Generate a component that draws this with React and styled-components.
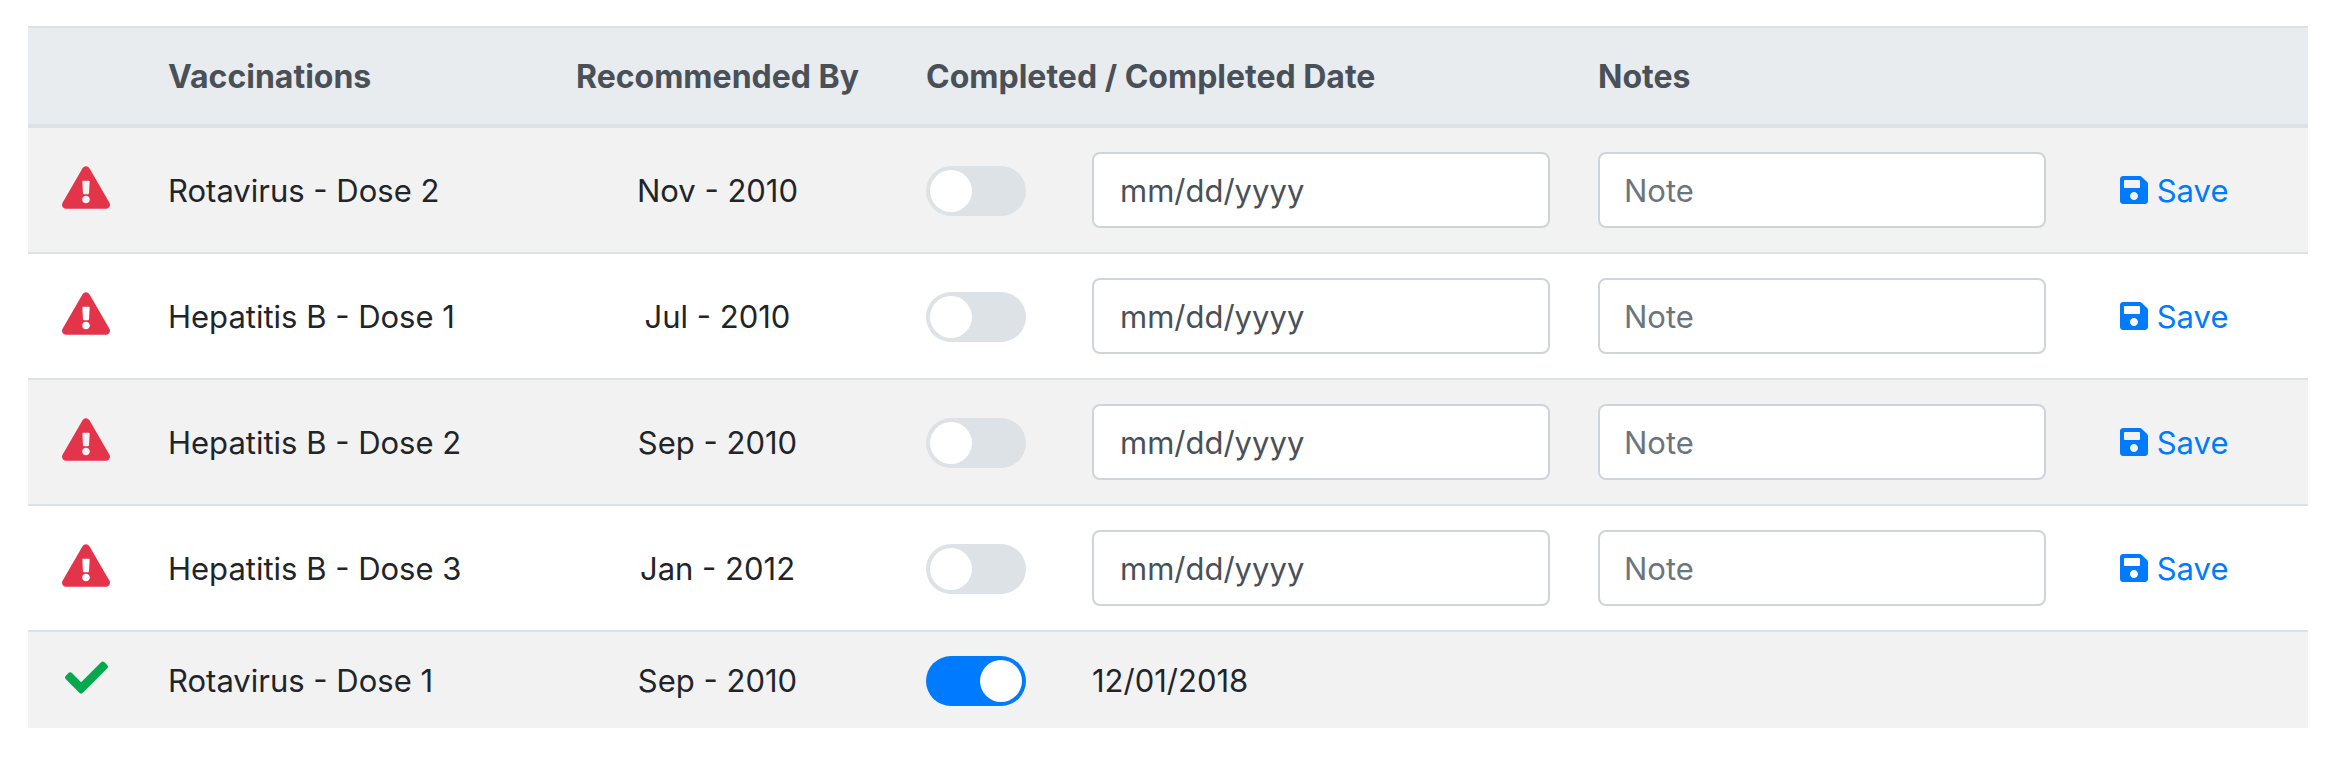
import React, { useState } from "react";
import styled, { createGlobalStyle } from "styled-components";
import { FaExclamationTriangle, FaCheck, FaSave } from "react-icons/fa";

const GlobalStyle = createGlobalStyle`
  *, *::before, *::after { box-sizing: border-box; }
  body {
    margin: 0;
    background: #fff;
    color: #212529;
    font-family: Inter, "Liberation Sans", sans-serif;
    font-size: 31px;
    line-height: 48px;
  }
`;

const Page = styled.main`
  padding: 26px 40px 32px 28px;
`;

const Table = styled.table`
  width: 100%;
  table-layout: fixed;
  border-collapse: separate;
  border-spacing: 0;
`;

const Col = styled.col`
  width: ${(p) => p.$width}px;
`;

const HeadCell = styled.th`
  padding: 25px 24px 23px;
  text-align: ${(p) => (p.$center ? "center" : "left")};
  white-space: nowrap;
  font-size: 32px;
  font-weight: 700;
  color: #495057;
  background: #e8ecef;
  border-top: 2px solid #dde2e6;
  border-bottom: 4px solid #dde2e6;
`;

const Row = styled.tr`
  &:nth-child(odd) {
    background: #f2f2f2;
  }
  &:not(:first-child) > td {
    border-top: 2px solid #dde2e6;
  }
`;

const Cell = styled.td`
  padding: 24px;
  vertical-align: middle;
  white-space: nowrap;
  text-align: ${(p) => (p.$center ? "center" : "left")};
`;

const TextCell = styled(Cell)`
  padding-block: 25px 23px;
`;

const ToggleCell = styled(Cell)`
  padding-block: 24px 22px;
`;

const StatusIcon = styled.svg`
  width: ${(p) => p.$width}px;
  height: 43px;
  vertical-align: -8px;
  color: ${(p) => p.$color};
`;

const Toggle = styled.input`
  appearance: none;
  display: flex;
  align-items: center;
  width: 100px;
  height: 50px;
  margin: 0;
  padding: 0 4px;
  border-radius: 25px;
  background: #dde2e6;
  cursor: pointer;

  &::before {
    content: "";
    width: 42px;
    height: 42px;
    border-radius: 50%;
    background: #fff;
  }
  &:checked {
    justify-content: flex-end;
    background: #007bff;
  }
`;

const TextField = styled.input`
  display: block;
  width: 100%;
  height: 76px;
  padding: 12px 24px;
  border: 2px solid #ced4da;
  border-radius: 8px;
  background: #fff;
  color: #495057;
  font: inherit;

  &::placeholder {
    color: #6c757d;
    opacity: 1;
  }
`;

const DateField = styled(TextField)`
  padding-inline: 26px;

  &::placeholder {
    color: #495057;
  }
`;

const SaveButton = styled.button`
  display: block;
  padding: 12px 24px;
  border: 2px solid transparent;
  background: none;
  color: #007bff;
  font: inherit;
  cursor: pointer;
`;

const SaveIcon = styled(FaSave)`
  width: 28px;
  height: 32px;
  vertical-align: -4px;
`;

const columns = [116, 389, 369, 166, 506, 496, 238];

const vaccinations = [
  { name: "Rotavirus - Dose 2", due: "Nov - 2010" },
  { name: "Hepatitis B - Dose 1", due: "Jul - 2010" },
  { name: "Hepatitis B - Dose 2", due: "Sep - 2010" },
  { name: "Hepatitis B - Dose 3", due: "Jan - 2012" },
  { name: "Rotavirus - Dose 1", due: "Sep - 2010", completedOn: "12/01/2018" },
];

function VaccinationRow({ name, due, completedOn }) {
  const [completed, setCompleted] = useState(Boolean(completedOn));
  return (
    <Row>
      <Cell $center>
        {completedOn ? (
          <StatusIcon as={FaCheck} $width={43} color="#06a94d" />
        ) : (
          <StatusIcon as={FaExclamationTriangle} $width={48} color="#e4344a" />
        )}
      </Cell>
      <TextCell>{name}</TextCell>
      <TextCell $center>{due}</TextCell>
      <ToggleCell>
        <Toggle
          type="checkbox"
          role="switch"
          aria-label={`${name} completed`}
          checked={completed}
          onChange={(e) => setCompleted(e.target.checked)}
        />
      </ToggleCell>
      {completedOn ? (
        <>
          <TextCell>{completedOn}</TextCell>
          <Cell />
          <Cell />
        </>
      ) : (
        <>
          <Cell>
            <DateField
              type="text"
              aria-label={`${name} completed date`}
              placeholder="mm/dd/yyyy"
            />
          </Cell>
          <Cell>
            <TextField type="text" aria-label={`${name} note`} placeholder="Note" />
          </Cell>
          <TextCell>
            <SaveButton type="button">
              <SaveIcon /> Save
            </SaveButton>
          </TextCell>
        </>
      )}
    </Row>
  );
}

export default function App() {
  return (
    <Page>
      <GlobalStyle />
      <Table>
        <colgroup>
          {columns.map((width, i) => (
            <Col key={i} $width={width} />
          ))}
        </colgroup>
        <thead>
          <tr>
            <HeadCell />
            <HeadCell>Vaccinations</HeadCell>
            <HeadCell $center>Recommended By</HeadCell>
            <HeadCell colSpan={2}>Completed / Completed Date</HeadCell>
            <HeadCell>Notes</HeadCell>
            <HeadCell />
          </tr>
        </thead>
        <tbody>
          {vaccinations.map((v) => (
            <VaccinationRow key={v.name} {...v} />
          ))}
        </tbody>
      </Table>
    </Page>
  );
}
